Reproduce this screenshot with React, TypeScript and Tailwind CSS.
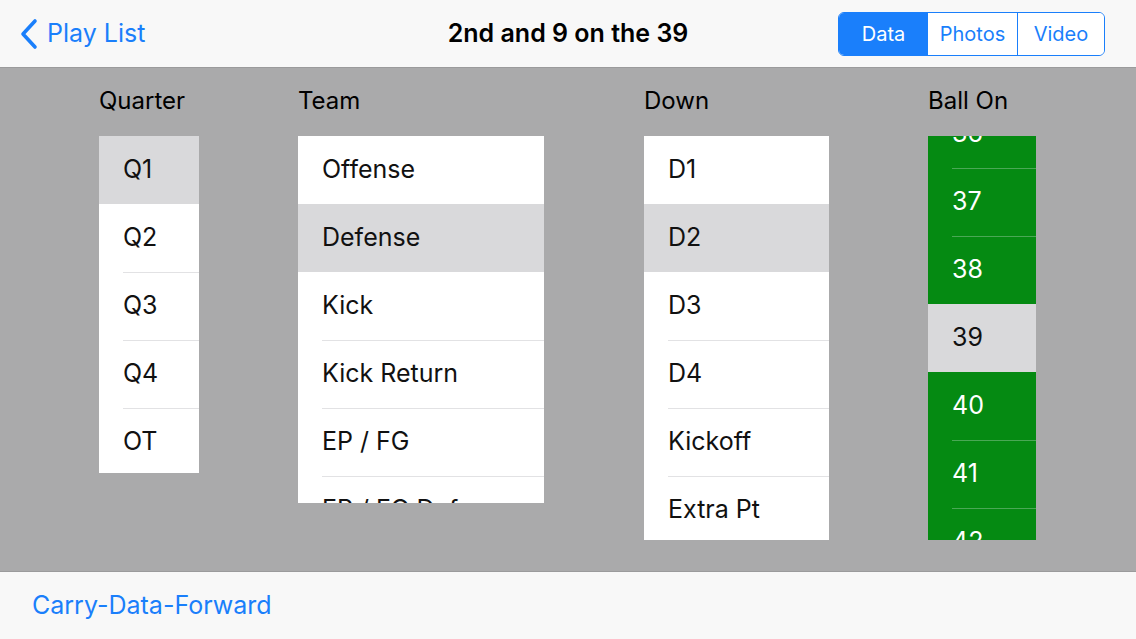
const font = { fontFamily: "Inter, 'Liberation Sans', sans-serif" };

type Col = {
  label: string;
  items: string[];
  selected: number;
  width: string;
  height: string;
};

const columns: Col[] = [
  { label: "Quarter", items: ["Q1", "Q2", "Q3", "Q4", "OT"], selected: 0, width: "w-[100px]", height: "h-[337px]" },
  {
    label: "Team",
    items: ["Offense", "Defense", "Kick", "Kick Return", "EP / FG", "EP / FG Def"],
    selected: 1,
    width: "w-[246px]",
    height: "h-[367px]",
  },
  { label: "Down", items: ["D1", "D2", "D3", "D4", "Kickoff", "Extra Pt"], selected: 1, width: "w-[185px]", height: "h-[404px]" },
];

function ListColumn({ col }: { col: Col }) {
  return (
    <div className="flex flex-col">
      <div className="h-[30px] text-[24px] leading-[30px] text-black">{col.label}</div>
      <div className={`mt-[20px] ${col.width} ${col.height} overflow-hidden bg-white`}>
        {col.items.map((item, i) => {
          const sel = i === col.selected;
          const lineAbove = i > 0 && !sel && i - 1 !== col.selected;
          return (
            <div key={item} className={`relative h-[68px] flex items-center pl-[24px] ${sel ? "bg-[#d9d9db]" : "bg-white"}`}>
              {lineAbove && <div className="absolute top-0 left-[24px] right-0 h-px bg-[#e2e2e4]" />}
              <span className="text-[25px] text-[#111] whitespace-nowrap">{item}</span>
            </div>
          );
        })}
      </div>
    </div>
  );
}

function BallOn() {
  const yards = [36, 37, 38, 39, 40, 41, 42];
  return (
    <div className="flex flex-col">
      <div className="h-[30px] text-[24px] leading-[30px] text-black">Ball On</div>
      <div className="mt-[20px] w-[108px] h-[404px] overflow-hidden bg-[#058a12]">
        <div className="-mt-[36px]">
          {yards.map((y, i) => {
            const sel = y === 39;
            const lineAbove = i > 0 && !sel && y !== 40;
            return (
              <div key={y} className={`relative h-[68px] flex items-center pl-[24px] ${sel ? "bg-[#d9d9db] text-[#111]" : "bg-[#058a12] text-white"}`}>
                {lineAbove && <div className="absolute top-0 left-[24px] right-0 h-px bg-[#4aa855]" />}
                <span className="text-[25px]">{y}</span>
              </div>
            );
          })}
        </div>
      </div>
    </div>
  );
}

export default function App() {
  return (
    <div className="w-[1136px] h-[639px] flex flex-col bg-[#aaaaab]" style={font}>
      {/* header */}
      <div className="h-[68px] shrink-0 relative flex items-center bg-[#f8f8f8] border-b border-[#9b9b9c]">
        <div className="flex items-center pl-[19px] text-[#1a7ffb]">
          <svg width="20" height="32" viewBox="0 0 20 32" fill="none">
            <path d="M16 3 L4 16 L16 29" stroke="#1a7ffb" strokeWidth="3.6" strokeLinecap="round" strokeLinejoin="round" />
          </svg>
          <span className="ml-[8px] text-[25px]">Play List</span>
        </div>
        <div className="absolute left-0 right-0 text-center text-[25px] font-semibold text-black pointer-events-none">
          2nd and 9 on the 39
        </div>
        <div className="ml-auto mr-[31px] flex h-[44px] rounded-[6px] border-[1.5px] border-[#1a7ffb] overflow-hidden text-[20px]">
          <div className="w-[89px] flex items-center justify-center bg-[#1a7ffb] text-white">Data</div>
          <div className="w-[89px] flex items-center justify-center text-[#1a7ffb] bg-white">Photos</div>
          <div className="w-[87px] flex items-center justify-center text-[#1a7ffb] bg-white border-l-[1.5px] border-[#1a7ffb]">Video</div>
        </div>
      </div>

      {/* picker area */}
      <div className="flex-1 flex pt-[18px] pl-[99px]">
        <ListColumn col={columns[0]} />
        <div className="ml-[99px]">
          <ListColumn col={columns[1]} />
        </div>
        <div className="ml-[100px]">
          <ListColumn col={columns[2]} />
        </div>
        <div className="ml-[99px]">
          <BallOn />
        </div>
      </div>

      {/* footer */}
      <div className="h-[68px] shrink-0 flex items-center pl-[32px] bg-[#f8f8f8] border-t border-[#9b9b9c]">
        <span className="text-[25px] text-[#1a7ffb]">Carry-Data-Forward</span>
      </div>
    </div>
  );
}
